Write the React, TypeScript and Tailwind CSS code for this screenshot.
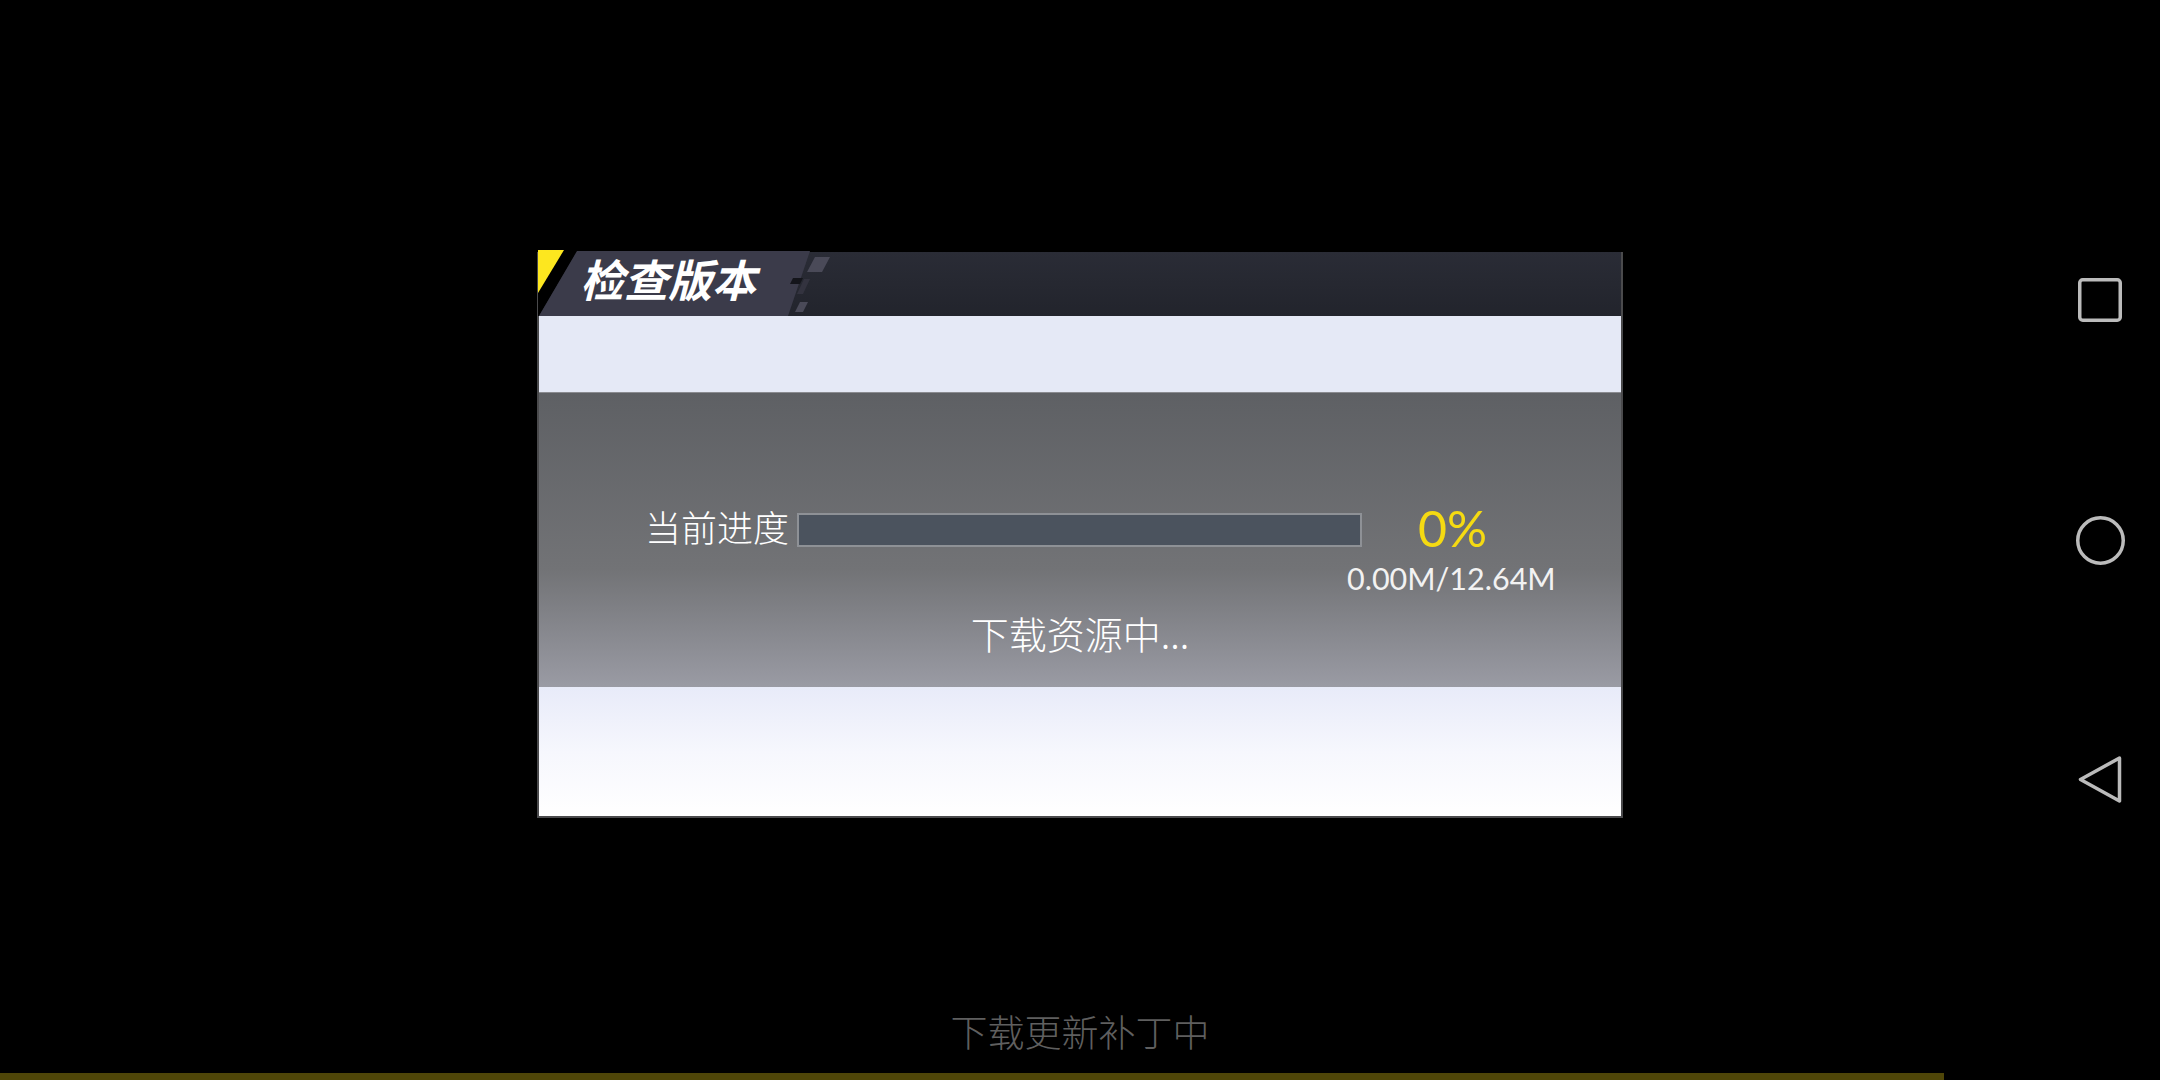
const cjk = "font-['Noto_Sans_CJK_SC','Noto_Sans',sans-serif]";

function TitleTab() {
    return (
        <svg className="absolute left-[-1px] top-[-2px] w-[300px] h-[66px]" viewBox="0 0 300 66" fill="none">
            <polygon points="0,0 40,0 1,66 0,66" fill="#000000" />
            <polygon points="39,1 272,1 250,66 1,66" fill="#3b3b4a" />
            <polygon points="0,0 26,0 0,43" fill="#fde71f" />
            <polygon points="277,7 292,7 284,22 269,22" fill="#4a4a58" />
            <polygon points="255,28 265,28 262,34 252,34" fill="#14151b" />
            <polygon points="266,29 272,29 265,44 259,44" fill="#33333f" />
            <polygon points="262,52 270,52 265,62 257,62" fill="#4a4a58" />
        </svg>
    );
}

function NavBar() {
    return (
        <div className="absolute right-0 top-0 w-[120px] h-full flex flex-col items-center">
            <svg className="mt-[278px] w-[44px] h-[44px]" viewBox="0 0 44 44" fill="none">
                <rect x="1.75" y="1.75" width="40.5" height="40.5" rx="3" stroke="#bbbbbb" strokeWidth="3.5" />
            </svg>
            <svg className="mt-[194px] w-[49px] h-[49px]" viewBox="0 0 49 49" fill="none">
                <circle cx="24.5" cy="24.5" r="22.75" stroke="#bbbbbb" strokeWidth="3.5" />
            </svg>
            <svg className="mt-[190px] w-[44px] h-[49px]" viewBox="0 0 44 49" fill="none">
                <path d="M41.5 3 L2.5 24.5 L41.5 46 Z" stroke="#bbbbbb" strokeWidth="3.5" strokeLinejoin="round" />
            </svg>
        </div>
    );
}

export default function App() {
    return (
        <div className={`relative w-[2160px] h-[1080px] overflow-hidden bg-black flex flex-col items-center ${cjk}`}>
            <div className="mt-[252px] w-[1086px] h-[566px] flex flex-col border-2 border-t-0 border-[#4a4a4c] box-border">
                <div className="relative h-[64px] bg-gradient-to-b from-[#2a2c36] to-[#22242c] shrink-0">
                    <TitleTab />
                    <div className="relative pl-[41px] mt-[-4px] text-[44px] leading-[60px] font-bold italic text-white">
                        检查版本
                    </div>
                </div>
                <div className="h-[77px] bg-[#e5e9f6] border-b border-[#8a8b90] shrink-0" />
                <div className="h-[294px] shrink-0 bg-gradient-to-b from-[#5e6064] via-[#727376] via-60% to-[#9a9ba4] flex flex-col text-white">
                    <div className="flex pl-[106px] pt-[118px]">
                        <div className="text-[36px] leading-[44px] font-light w-[152px] mt-[-7px]">当前进度</div>
                        <div className="w-[565px] h-[34px] mt-[2px] bg-[#4b535e] border-2 border-[#8e9196]" />
                        <div className="ml-[-15px] mt-[-13px] w-[240px] flex flex-col items-start font-['Lato',sans-serif]">
                            <div className="pl-[71px] text-[50px] leading-[60px] text-[#f5da12]">0%</div>
                            <div className="text-[30.5px] leading-[38px] text-[#f2f2f2] mt-[1px]">0.00M/12.64M</div>
                        </div>
                    </div>
                    <div className="text-center mt-[14px] text-[38px] leading-[44px] font-light">下载资源中...</div>
                </div>
                <div className="flex-1 bg-gradient-to-b from-[#e8ebf9] via-[#f6f7fd] via-50% to-white" />
            </div>
            <div className="mt-[188px] text-[37px] leading-[50px] font-light text-[#5f5f5f]">下载更新补丁中</div>
            <div className="mt-auto self-start w-[1944px] h-[7px] bg-[#4f4608]" />
            <NavBar />
        </div>
    );
}
